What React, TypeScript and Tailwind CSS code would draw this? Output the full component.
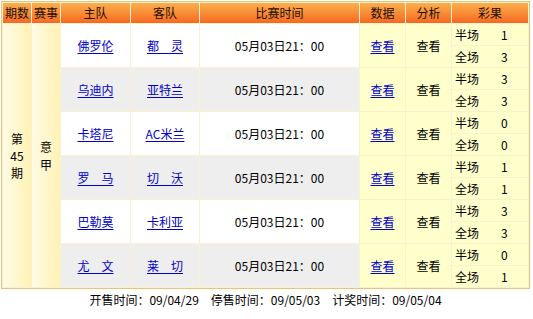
import { Fragment } from 'react'

const MATCHES = [
  { home: '佛罗伦', away: '都\u3000灵', half: '1', full: '3' },
  { home: '乌迪内', away: '亚特兰', half: '3', full: '3' },
  { home: '卡塔尼', away: 'AC米兰', half: '0', full: '0' },
  { home: '罗\u3000马', away: '切\u3000沃', half: '1', full: '1' },
  { home: '巴勒莫', away: '卡利亚', half: '3', full: '3' },
  { home: '尤\u3000文', away: '莱\u3000切', half: '0', full: '1' },
]

const font = "font-['Noto_Sans_CJK_SC','Noto_Sans',sans-serif]"
const head = 'h-[20px] p-0 text-center font-normal bg-gradient-to-b from-[#fbae4c] to-[#f4681f] text-[#1a0d05]'
const link = 'text-[#0000cc] underline underline-offset-2'

export default function App() {
  return (
    <div className={`w-[533px] h-[319px] bg-white pl-[1px] pt-[1px] text-[12px] leading-none text-black ${font}`}>
      <table className="w-[529px] table-fixed border-separate border-spacing-[1px] border border-[#e6c47c] bg-[#fbf1cf]">
        <colgroup>
          <col className="w-[28px]" />
          <col className="w-[28px]" />
          <col className="w-[69px]" />
          <col className="w-[68px]" />
          <col className="w-[159px]" />
          <col className="w-[45px]" />
          <col className="w-[45px]" />
          <col className="w-[76px]" />
        </colgroup>
        <thead>
          <tr>
            <th className={head}>期数</th>
            <th className={head}>赛事</th>
            <th className={head}>主队</th>
            <th className={head}>客队</th>
            <th className={head}>比赛时间</th>
            <th className={head}>数据</th>
            <th className={head}>分析</th>
            <th className={head}>彩果</th>
          </tr>
        </thead>
        <tbody>
          {MATCHES.map((m, i) => {
            const stripe = i % 2 === 0 ? 'bg-white' : 'bg-[#eeeeee]'
            return (
              <Fragment key={i}>
                <tr>
                  {i === 0 && (
                    <>
                      <td rowSpan={12} className="p-0 text-center align-middle bg-gradient-to-r from-[#fffbe4] to-[#fff2b4] leading-[17px]">
                        第<br />45<br />期
                      </td>
                      <td rowSpan={12} className="p-0 text-center align-middle bg-gradient-to-r from-[#fffbe4] to-[#fff2b4] leading-[18px]">
                        意<br />甲
                      </td>
                    </>
                  )}
                  <td rowSpan={2} className={`p-0 text-center ${stripe}`}>
                    <span className={`${link} whitespace-pre`}>{m.home}</span>
                  </td>
                  <td rowSpan={2} className={`p-0 text-center ${stripe}`}>
                    <span className={`${link} whitespace-pre`}>{m.away}</span>
                  </td>
                  <td rowSpan={2} className={`p-0 text-center ${stripe}`}>05月03日21：00</td>
                  <td rowSpan={2} className="p-0 text-center bg-[#ffffcc]">
                    <span className={link}>查看</span>
                  </td>
                  <td rowSpan={2} className="p-0 text-center bg-[#ffffcc]">查看</td>
                  <td className="h-[21px] p-0 bg-[#ffffcc]">
                    <div className="flex items-center pl-[3px]">
                      <span className="w-[46px]">半场</span>
                      <span>{m.half}</span>
                    </div>
                  </td>
                </tr>
                <tr>
                  <td className="h-[21px] p-0 bg-[#ffffcc]">
                    <div className="flex items-center pl-[3px]">
                      <span className="w-[46px]">全场</span>
                      <span>{m.full}</span>
                    </div>
                  </td>
                </tr>
              </Fragment>
            )
          })}
        </tbody>
      </table>
      <div className="w-[529px] h-[20px] flex items-center justify-center gap-[12px] pt-[2px]">
        <span>开售时间：09/04/29</span>
        <span>停售时间：09/05/03</span>
        <span>计奖时间：09/05/04</span>
      </div>
    </div>
  )
}
